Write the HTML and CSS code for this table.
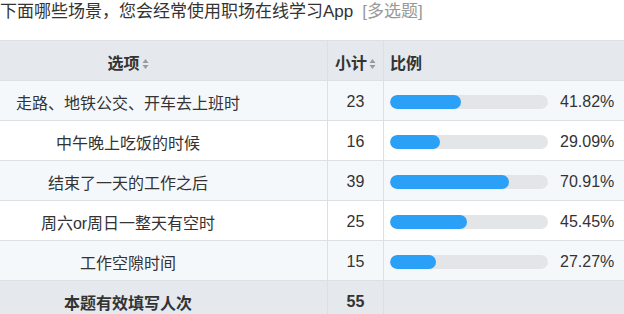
FILE: index.html
```html
<!DOCTYPE html>
<html lang="zh-CN">
<head>
<meta charset="utf-8">
<link rel="stylesheet" href="styles.css">
</head>
<body>
<div class="page">
  <div class="title">下面哪些场景，您会经常使用职场在线学习App<span class="tag">[多选题]</span></div>
  <table class="stats">
    <colgroup>
      <col class="c-opt"><col class="c-cnt"><col class="c-pct">
    </colgroup>
    <thead>
      <tr>
        <th class="opt">选项<svg class="sort" viewBox="0 0 7 12" width="7" height="12"><path d="M3.5 1 L6.5 5 L0.5 5 Z" fill="#9a9a9a"/><path d="M3.5 11 L6.5 7 L0.5 7 Z" fill="#9a9a9a"/></svg></th>
        <th class="cnt">小计<svg class="sort" viewBox="0 0 7 12" width="7" height="12"><path d="M3.5 1 L6.5 5 L0.5 5 Z" fill="#9a9a9a"/><path d="M3.5 11 L6.5 7 L0.5 7 Z" fill="#9a9a9a"/></svg></th>
        <th class="pct">比例</th>
      </tr>
    </thead>
    <tbody>
      <tr class="alt">
        <td class="opt">走路、地铁公交、开车去上班时</td>
        <td class="cnt">23</td>
        <td class="pct"><div class="bar"><div class="track"><div class="fill" style="width:71px"></div></div><span class="val">41.82%</span></div></td>
      </tr>
      <tr>
        <td class="opt">中午晚上吃饭的时候</td>
        <td class="cnt">16</td>
        <td class="pct"><div class="bar"><div class="track"><div class="fill" style="width:50px"></div></div><span class="val">29.09%</span></div></td>
      </tr>
      <tr class="alt">
        <td class="opt">结束了一天的工作之后</td>
        <td class="cnt">39</td>
        <td class="pct"><div class="bar"><div class="track"><div class="fill" style="width:119px"></div></div><span class="val">70.91%</span></div></td>
      </tr>
      <tr>
        <td class="opt">周六or周日一整天有空时</td>
        <td class="cnt">25</td>
        <td class="pct"><div class="bar"><div class="track"><div class="fill" style="width:77px"></div></div><span class="val">45.45%</span></div></td>
      </tr>
      <tr class="alt">
        <td class="opt">工作空隙时间</td>
        <td class="cnt">15</td>
        <td class="pct"><div class="bar"><div class="track"><div class="fill" style="width:46px"></div></div><span class="val">27.27%</span></div></td>
      </tr>
      <tr class="foot">
        <td class="opt">本题有效填写人次</td>
        <td class="cnt">55</td>
        <td class="pct"></td>
      </tr>
    </tbody>
  </table>
</div>
</body>
</html>
```

FILE: styles.css
```css
html, body {
  margin: 0;
  padding: 0;
  background: #ffffff;
}
body {
  width: 624px;
  height: 314px;
  overflow: hidden;
  font-family: "Liberation Sans", "Noto Sans CJK SC", sans-serif;
  color: #333333;
}
.page {
  width: 624px;
}
.title {
  height: 40px;
  font-size: 17px;
  line-height: 24px;
  white-space: nowrap;
  color: #333333;
}
.tag {
  color: #999999;
  margin-left: 9px;
}
.stats {
  border-collapse: collapse;
  table-layout: fixed;
  width: 696px;
  margin-left: -72px;
  font-size: 16px;
}
.c-opt { width: 399px; }
.c-cnt { width: 56px; }
.c-pct { width: 241px; }
.stats th,
.stats td {
  height: 40px;
  padding: 3px 0 0 0;
  border-top: 1px solid #dcdfe3;
  border-bottom: 1px solid #dcdfe3;
  border-left: 1px solid #dcdfe3;
  vertical-align: middle;
  box-sizing: border-box;
  white-space: nowrap;
}
.stats thead tr,
.stats tr.foot {
  background: #e5e8ec;
}
.stats tr.alt {
  background: #f5f8fb;
}
.stats th {
  font-weight: bold;
  color: #333333;
}
.stats tr.foot td {
  font-weight: bold;
}
.opt {
  text-align: center;
}
.cnt {
  text-align: center;
}
th.pct {
  text-align: left;
  padding-left: 6px;
}
td.pct {
  padding-left: 6px;
}
.sort {
  vertical-align: -1px;
  margin-left: 2px;
}
.bar {
  display: flex;
  align-items: center;
  gap: 12px;
}
.track {
  width: 158px;
  height: 14px;
  border-radius: 7px;
  background: #e4e5e7;
  overflow: hidden;
}
.fill {
  height: 14px;
  border-radius: 7px;
  background: #2aa1f7;
}
.val {
  color: #333333;
}
```
